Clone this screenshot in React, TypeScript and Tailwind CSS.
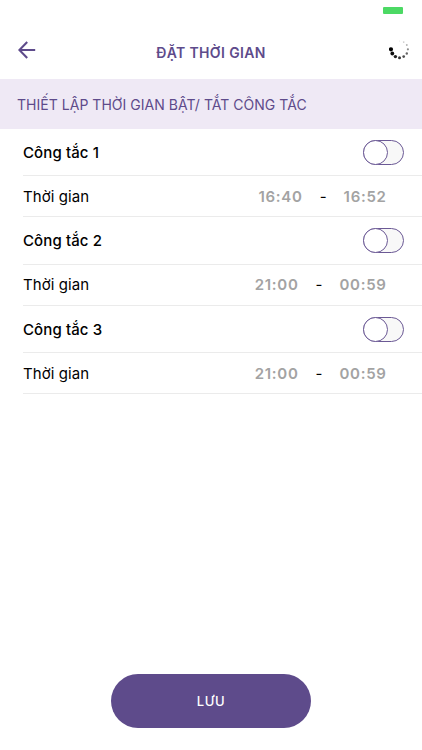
import React from "react";

type SwitchTimer = { name: string; from: string; to: string };

const timers: SwitchTimer[] = [
  { name: "Công tắc 1", from: "16:40", to: "16:52" },
  { name: "Công tắc 2", from: "21:00", to: "00:59" },
  { name: "Công tắc 3", from: "21:00", to: "00:59" },
];

function BackArrow() {
  return (
    <svg width="18" height="18" viewBox="0 0 18 18" fill="none" stroke="#5e4b8b" strokeWidth="2.1">
      <path d="M17.2 9H1.6M9.2 1 1.4 9l7.8 8" />
    </svg>
  );
}

const spinnerDots = [
  { x: 2, y: 9.3, r: 2.1, o: 1 },
  { x: 3.3, y: 13.5, r: 1.9, o: 0.95 },
  { x: 6.4, y: 16.6, r: 1.7, o: 0.88 },
  { x: 10.5, y: 17.7, r: 1.5, o: 0.8 },
  { x: 14.7, y: 16.6, r: 1.35, o: 0.7 },
  { x: 17.8, y: 13.5, r: 1.2, o: 0.6 },
  { x: 18.9, y: 9.3, r: 1.1, o: 0.45 },
  { x: 17.8, y: 5, r: 0.95, o: 0.3 },
  { x: 14.7, y: 2.1, r: 0.85, o: 0.2 },
  { x: 10.5, y: 1, r: 0.6, o: 0.1 },
];

function Spinner() {
  return (
    <svg width="21" height="20" viewBox="0 0 21 20">
      {spinnerDots.map((d, i) => (
        <circle key={i} cx={d.x} cy={d.y} r={d.r} opacity={d.o} fill="#000" />
      ))}
    </svg>
  );
}

function Toggle() {
  return (
    <span className="mt-[0.6px] flex h-[25px] w-[41px] rounded-full border border-[#6b5995] bg-[#f8f8f8]">
      <span className="-my-px -ml-px size-[25px] rounded-full border border-[#6b5995] bg-white" />
    </span>
  );
}

function TimerRows({ timer }: { timer: SwitchTimer }) {
  return (
    <li className="pl-[23px]">
      <div className="flex h-[47.4px] items-center justify-between border-b border-[#ebebeb] pr-[18px]">
        <span className="pt-[2px] text-[15px] font-medium tracking-[0.1px]">{timer.name}</span>
        <Toggle />
      </div>
      <div className="flex h-[41px] items-center border-b border-[#ebebeb] pt-[1.4px] pr-9 text-[15px]">
        <span className="flex-1 tracking-[0.07px]">Thời gian</span>
        <span className="font-semibold tracking-[0.7px] text-[#a3a3a3]">{timer.from}</span>
        <span className="w-[41px] text-center">-</span>
        <span className="-mr-[0.6px] font-semibold tracking-[0.7px] text-[#a3a3a3]">{timer.to}</span>
      </div>
    </li>
  );
}

export default function App() {
  return (
    <div className="flex h-[750px] w-[422px] flex-col bg-white font-['Inter','Noto_Sans',sans-serif] text-black">
      <div className="flex h-[25px] justify-end pt-[7px] pr-[19px]">
        <span className="h-[7px] w-5 rounded-[1px] bg-[#4cd964]" />
      </div>
      <header className="grid h-[54px] grid-cols-[1fr_auto_1fr] items-center px-3">
        <button className="mb-1 ml-[5.5px] justify-self-start" aria-label="Quay lại">
          <BackArrow />
        </button>
        <h1 className="text-[14px] font-semibold tracking-[0.35px] text-[#5e4b8b]">ĐẶT THỜI GIAN</h1>
        <span className="mb-1 justify-self-end">
          <Spinner />
        </span>
      </header>
      <h2 className="flex h-[50px] items-center bg-[#efe9f5] pl-[17px] text-[14px] tracking-[0.03px] text-[#5e4b8b]">
        THIẾT LẬP THỜI GIAN BẬT/ TẮT CÔNG TẮC
      </h2>
      <ul>
        {timers.map((t) => (
          <TimerRows key={t.name} timer={t} />
        ))}
      </ul>
      <button className="mx-auto mt-auto mb-[22px] h-[54px] w-[200px] rounded-full bg-[#5e4b8b] pt-[2px] text-[13px] font-medium tracking-[0.6px] text-white">
        LƯU
      </button>
    </div>
  );
}
